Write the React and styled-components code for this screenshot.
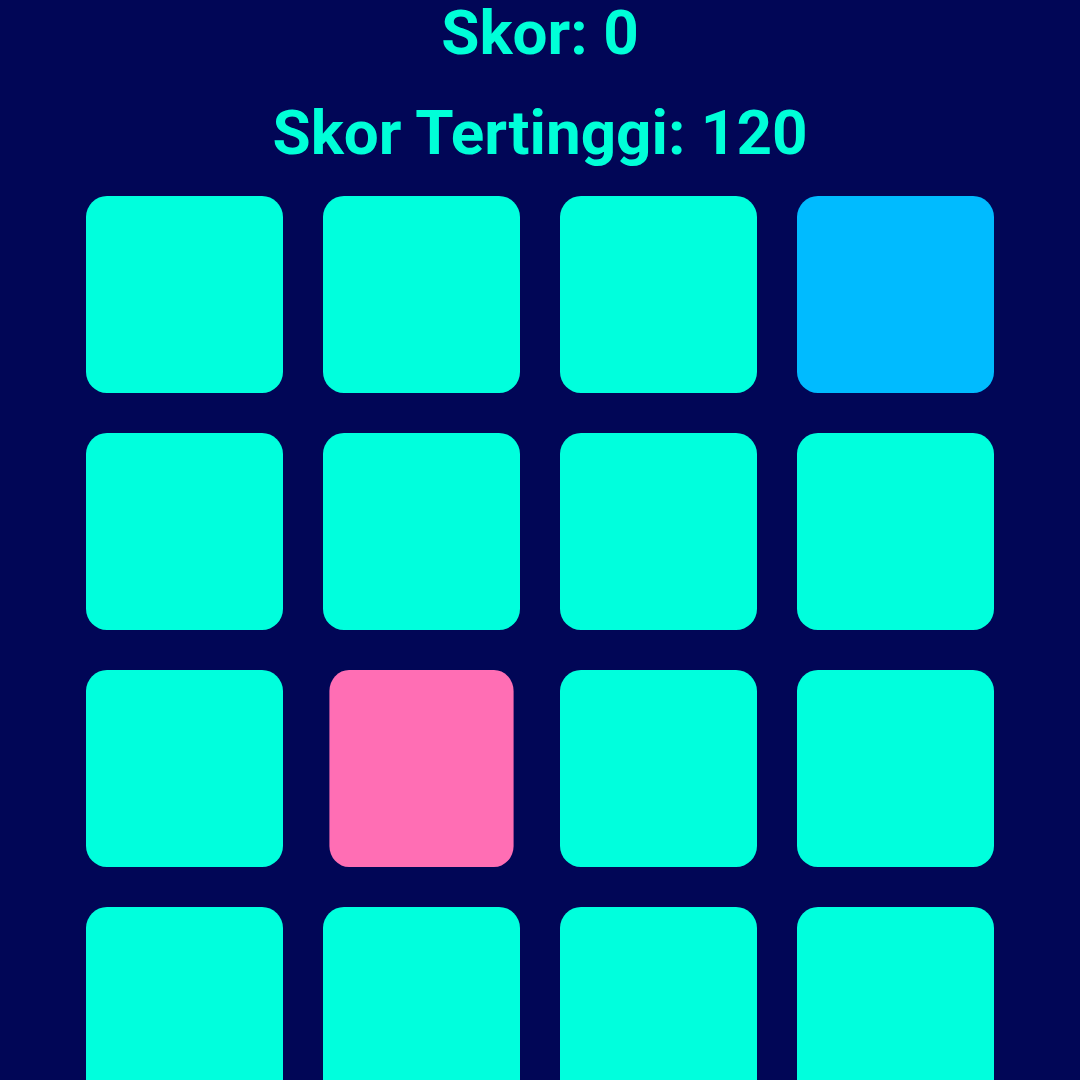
import React from 'react';
import styled, { createGlobalStyle } from 'styled-components';

const GlobalStyle = createGlobalStyle`
  html, body {
    margin: 0;
    padding: 0;
    background: #010656;
    overflow: hidden;
  }
`;

const Page = styled.div`
  width: 1080px;
  height: 1080px;
  display: flex;
  flex-direction: column;
  align-items: center;
  font-family: Roboto, "Noto Sans", sans-serif;
`;

const Header = styled.div`
  display: flex;
  flex-direction: column;
  align-items: center;
  gap: 34px;
`;

const ScoreText = styled.h2`
  margin: 0;
  color: #00ffd8;
  font-size: 62px;
  font-weight: 700;
  line-height: 66px;
`;

const Board = styled.div`
  display: grid;
  grid-template-columns: repeat(4, 197px);
  grid-auto-rows: 197px;
  gap: 40px;
  margin-top: 30px;
`;

const colors = {
  idle: '#00ffdd',
  active: '#00bbff',
  flip: '#ff6eb4',
};

const Tile = styled.div`
  border-radius: 21px;
  background: ${(p) => colors[p.$state]};
  transform: ${(p) => (p.$state === 'flip' ? 'scaleX(0.935)' : 'none')};
`;

const tiles = Array.from({ length: 16 }, (_, i) => {
  if (i === 3) return 'active';
  if (i === 9) return 'flip';
  return 'idle';
});

export default function App() {
  return (
    <>
      <GlobalStyle />
      <Page>
        <Header>
          <ScoreText>Skor: 0</ScoreText>
          <ScoreText>Skor Tertinggi: 120</ScoreText>
        </Header>
        <Board>
          {tiles.map((s, i) => (
            <Tile key={i} $state={s} />
          ))}
        </Board>
      </Page>
    </>
  );
}
